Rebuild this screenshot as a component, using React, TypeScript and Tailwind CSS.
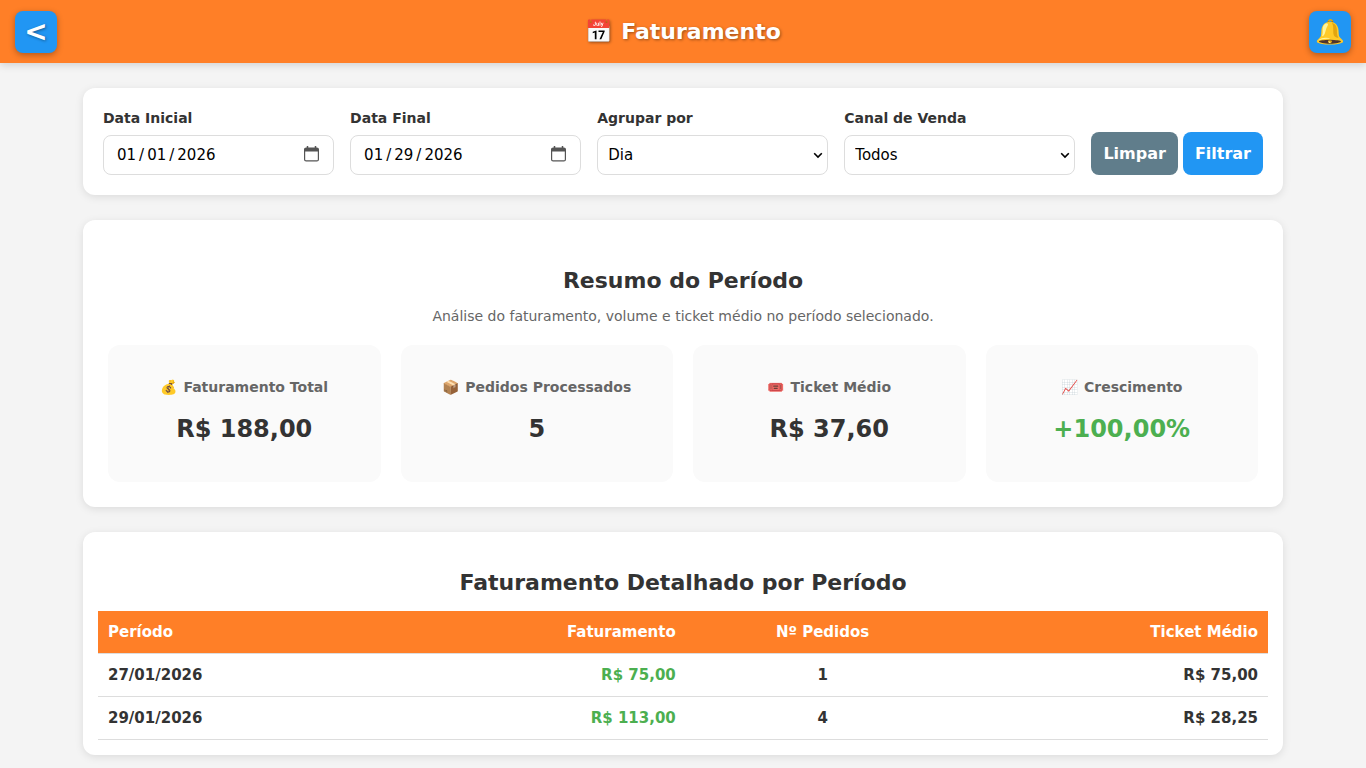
import { useState } from "react";

const resumo = [
  { icone: "💰", titulo: "Faturamento Total", valor: "R$ 188,00", cor: "text-[#333]" },
  { icone: "📦", titulo: "Pedidos Processados", valor: "5", cor: "text-[#333]" },
  { icone: "🎟️", titulo: "Ticket Médio", valor: "R$ 37,60", cor: "text-[#333]" },
  { icone: "📈", titulo: "Crescimento", valor: "+100,00%", cor: "text-[#4caf50]" },
];

const linhas = [
  { periodo: "27/01/2026", faturamento: "R$ 75,00", pedidos: 1, ticket: "R$ 75,00" },
  { periodo: "29/01/2026", faturamento: "R$ 113,00", pedidos: 4, ticket: "R$ 28,25" },
];

const campo =
  "block w-full h-10 border border-[#ddd] rounded-lg bg-white text-black text-[15px]";

function Header() {
  return (
    <header className="bg-[#ff7f27] h-[63px] px-[15px] flex justify-between items-center text-white shadow-[0_2px_8px_rgba(0,0,0,0.15)]">
      <button
        type="button"
        aria-label="Voltar"
        className="size-[42px] rounded-lg bg-[#2196f3] text-[28px] leading-8 font-bold shadow-[0_2px_6px_rgba(0,0,0,0.3)] [text-shadow:1px_1px_3px_rgba(0,0,0,0.4)]"
      >
        &lt;
      </button>
      <h1 className="flex items-center gap-[9px] text-[22px] font-bold [text-shadow:1px_1px_3px_rgba(0,0,0,0.4)]">
        <span>📅</span>
        <span>Faturamento</span>
      </h1>
      <button
        type="button"
        aria-label="Notificações"
        className="size-[42px] rounded-lg bg-[#2196f3] text-[24px] leading-none shadow-[0_2px_6px_rgba(0,0,0,0.3)]"
      >
        🔔
      </button>
    </header>
  );
}

type CampoProps = {
  id: string;
  rotulo: string;
  valor: string;
  onChange: (valor: string) => void;
};

function CampoData({ id, rotulo, valor, onChange }: CampoProps) {
  return (
    <div className="flex-1">
      <label htmlFor={id} className="block mb-[7px] text-sm font-bold">
        {rotulo}
      </label>
      <div className="relative">
        <input
          id={id}
          type="date"
          value={valor}
          onChange={(e) => onChange(e.target.value)}
          className={`${campo} px-3 [&::-webkit-datetime-edit-text]:px-[2px] [&::-webkit-calendar-picker-indicator]:opacity-0`}
        />
        <svg
          viewBox="0 0 16 16"
          className="absolute right-[14px] top-[11px] size-4 pointer-events-none"
          fill="none"
        >
          <rect x="0.6" y="2.1" width="13.8" height="12.8" rx="1.5" stroke="#555" strokeWidth="1.2" />
          <path d="M0.5 3.5a1.5 1.5 0 0 1 1.5-1.5h11a1.5 1.5 0 0 1 1.5 1.5V5.5h-14z" fill="#555" />
          <path d="M3.5 0v3M11.5 0v3" stroke="#555" strokeWidth="1.5" />
        </svg>
      </div>
    </div>
  );
}

function CampoSelect({
  id,
  rotulo,
  valor,
  onChange,
  opcoes,
}: CampoProps & { opcoes: string[] }) {
  return (
    <div className="flex-1">
      <label htmlFor={id} className="block mb-[7px] text-sm font-bold">
        {rotulo}
      </label>
      <div className="relative">
        <select
          id={id}
          value={valor}
          onChange={(e) => onChange(e.target.value)}
          className={`${campo} appearance-none px-[10px]`}
        >
          {opcoes.map((opcao) => (
            <option key={opcao}>{opcao}</option>
          ))}
        </select>
        <svg
          viewBox="0 0 10 10"
          className="absolute right-[5px] top-[15px] size-[10px] pointer-events-none"
          fill="none"
        >
          <path d="M1.2 3.2L5 7l3.8-3.8" stroke="#000" strokeWidth="1.6" />
        </svg>
      </div>
    </div>
  );
}

function Filtros() {
  const [inicio, setInicio] = useState("2026-01-01");
  const [fim, setFim] = useState("2026-01-29");
  const [grupo, setGrupo] = useState("Dia");
  const [canal, setCanal] = useState("Todos");

  return (
    <form
      onSubmit={(e) => e.preventDefault()}
      className="bg-white rounded-xl p-5 flex items-end gap-4 shadow-[0_2px_8px_rgba(0,0,0,0.1)]"
    >
      <CampoData id="inicio" rotulo="Data Inicial" valor={inicio} onChange={setInicio} />
      <CampoData id="fim" rotulo="Data Final" valor={fim} onChange={setFim} />
      <CampoSelect
        id="grupo"
        rotulo="Agrupar por"
        valor={grupo}
        onChange={setGrupo}
        opcoes={["Dia", "Mês"]}
      />
      <CampoSelect
        id="canal"
        rotulo="Canal de Venda"
        valor={canal}
        onChange={setCanal}
        opcoes={["Todos"]}
      />
      <div className="flex gap-[5px]">
        <button type="button" className="h-[43px] px-3 rounded-lg bg-[#607d8b] text-white font-bold">
          Limpar
        </button>
        <button type="submit" className="h-[43px] px-3 rounded-lg bg-[#2196f3] text-white font-bold">
          Filtrar
        </button>
      </div>
    </form>
  );
}

function Resumo() {
  return (
    <section className="bg-white rounded-xl px-[25px] pt-[45px] pb-[25px] text-center shadow-[0_2px_8px_rgba(0,0,0,0.1)]">
      <h2 className="text-[22px] leading-8 font-bold">Resumo do Período</h2>
      <p className="mt-[9px] mb-[19px] text-sm text-[#666]">
        Análise do faturamento, volume e ticket médio no período selecionado.
      </p>
      <div className="grid grid-cols-4 gap-5">
        {resumo.map((item) => (
          <div key={item.titulo} className="bg-[#fafafa] rounded-xl pt-8 pb-[37px] px-5">
            <h3 className="flex justify-center gap-[6px] text-sm font-bold text-[#666]">
              <span>{item.icone}</span>
              <span>{item.titulo}</span>
            </h3>
            <p className={`mt-4 text-2xl font-bold ${item.cor}`}>{item.valor}</p>
          </div>
        ))}
      </div>
    </section>
  );
}

function Tabela() {
  return (
    <section className="bg-white rounded-xl px-[15px] pt-[35px] pb-[15px] shadow-[0_2px_8px_rgba(0,0,0,0.1)]">
      <h2 className="mb-3 text-[22px] leading-8 font-bold text-center">
        Faturamento Detalhado por Período
      </h2>
      <table className="w-full text-[15px] font-bold border-collapse">
        <thead>
          <tr className="bg-[#ff7f27] text-white h-[42px] border-b border-[#ddd]">
            <th className="px-[10px] text-left">Período</th>
            <th className="px-[10px] text-right">Faturamento</th>
            <th className="px-[10px] text-center">Nº Pedidos</th>
            <th className="px-[10px] text-right">Ticket Médio</th>
          </tr>
        </thead>
        <tbody>
          {linhas.map((linha) => (
            <tr key={linha.periodo} className="h-[43px] border-b border-[#ddd]">
              <td className="px-[10px] pt-[2px] text-left">{linha.periodo}</td>
              <td className="px-[10px] pt-[2px] text-right text-[#4caf50]">{linha.faturamento}</td>
              <td className="px-[10px] pt-[2px] text-center">{linha.pedidos}</td>
              <td className="px-[10px] pt-[2px] text-right">{linha.ticket}</td>
            </tr>
          ))}
        </tbody>
      </table>
    </section>
  );
}

function App() {
  return (
    <div className="min-h-screen bg-[#f4f4f4] text-[#333] font-['DejaVu_Sans',sans-serif]">
      <Header />
      <main className="max-w-[1200px] mx-auto pt-[25px] pb-[13px] flex flex-col gap-[25px]">
        <Filtros />
        <Resumo />
        <Tabela />
      </main>
    </div>
  );
}

export default App;
